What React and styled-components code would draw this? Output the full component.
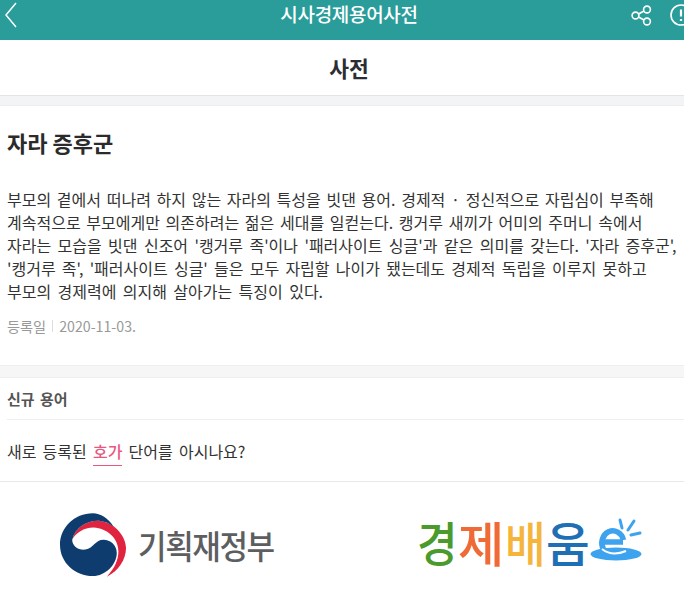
import React from "react";
import styled, { createGlobalStyle } from "styled-components";

const Global = createGlobalStyle`
  html, body { margin: 0; padding: 0; background: #fff; overflow: hidden; width: 684px; height: 594px; }
  * { box-sizing: border-box; }
  body { font-family: "Noto Sans CJK KR", "Noto Sans", sans-serif; color: #333; }
`;
const Page = styled.div`width: 698px; height: 594px; overflow: hidden; background: #fff;`;
const TopBar = styled.header`
  height: 40px; background: #2a9d9a; display: grid; grid-template-columns: 1fr auto 1fr; align-items: center;
  padding: 0 5px; color: #fff;
`;
const TopTitle = styled.h1`margin: -12px 0 0; font-size: 19px; font-weight: 500; letter-spacing: -0.3px; line-height: 26px;`;
const TopActions = styled.div`display: flex; align-items: center; justify-content: flex-end; gap: 16px;`;
const Back = styled.svg`width: 18px; height: 32px; margin-top: -10px; fill: none; stroke: #fff; stroke-width: 1.5;`;
const ActionIcon = styled.svg`width: 24px; height: 24px; fill: none; stroke: #fff; stroke-width: 1.6; margin-top: -10px;`;
const SubBar = styled.div`
  height: 56px; display: flex; align-items: center; justify-content: center; border-bottom: 1px solid #e2e4e8;
  font-size: 21.5px; font-weight: 700; color: #2c2c33; padding-bottom: 1px;
`;
const Band = styled.div`height: 10px; background: #f2f4f6; border-bottom: 1px solid #eceef0;`;
const Article = styled.section`padding: 18px 7px 0; height: 259px;`;
const Term = styled.h2`margin: 0; font-size: 22px; font-weight: 700; line-height: 36px; color: #2b2b2b;`;
const Body = styled.p`margin: 28px 0 0; font-size: 16px; line-height: 23px; color: #333;`;
const Line = styled.span`display: block; white-space: nowrap; word-spacing: ${p => p.$ws}px;`;
const Meta = styled.div`display: flex; align-items: center; margin-top: 11px; font-size: 14.2px; color: #999; line-height: 24px;`;
const MetaSep = styled.span`width: 1px; height: 12px; background: #ddd; margin: 0 6px 0 6px;`;
const GreyBand = styled.div`height: 13px; background: #f6f6f6; border-top: 1px solid #eee; border-bottom: 1px solid #eee;`;
const NewSection = styled.section`padding: 0 0 0 7px; border-bottom: 1px solid #e8e8e8; height: 104px;`;
const NewHead = styled.div`height: 42px; display: flex; align-items: center; font-size: 15px; font-weight: 700; color: #555; word-spacing: 2px; border-bottom: 1px solid #eee;`;
const NewText = styled.p`margin: 18px 0 0; font-size: 16px; line-height: 26px; color: #333; word-spacing: 2.6px;`;
const Hot = styled.a`color: #e9587f; font-weight: 500; border-bottom: 1px solid #e9587f; padding-bottom: 2px;`;
const Logos = styled.div`display: flex; height: 112px; width: 684px;`;
const MofLogo = styled.div`display: flex; align-items: center; margin: 29px 0 0 59px; height: 68px; width: 358px;`;
const MofName = styled.span`font-size: 33px; font-weight: 500; color: #5c5e60; letter-spacing: -1.5px; margin-left: 11px; line-height: 40px; transform: scaleX(0.94); transform-origin: left;`;
const Taegeuk = styled.svg`width: 68px; height: 66px; flex: none;`;
const EduLogo = styled.div`display: flex; align-items: center; height: 60px; margin-top: 29px;`;
const EduChar = styled.span`display: block; width: ${p => p.$w}px; font-size: 48px; font-weight: 500; line-height: 56px; color: ${p => p.$c}; transform: scaleX(${p => p.$sx}); transform-origin: left;`;
const EduE = styled.svg`width: 52px; height: 52px; flex: none; margin-top: -2px;`;

const lines = [
  ["부모의 곁에서 떠나려 하지 않는 자라의 특성을 빗댄 용어. 경제적 · 정신적으로 자립심이 부족해", 2.1],
  ["계속적으로 부모에게만 의존하려는 젊은 세대를 일컫는다. 캥거루 새끼가 어미의 주머니 속에서", 2.1],
  ["자라는 모습을 빗댄 신조어 '캥거루 족'이나 '패러사이트 싱글'과 같은 의미를 갖는다. '자라 증후군',", 2.8],
  ["'캥거루 족', '패러사이트 싱글' 들은 모두 자립할 나이가 됐는데도 경제적 독립을 이루지 못하고", 2.65],
  ["부모의 경제력에 의지해 살아가는 특징이 있다.", 2.8],
];

export default function App() {
  return (
    <Page>
      <Global />
      <TopBar>
        <Back viewBox="0 0 18 32"><path d="M11 4 L1 16 L11 28" /></Back>
        <TopTitle>시사경제용어사전</TopTitle>
        <TopActions>
          <ActionIcon viewBox="0 0 24 24">
            <circle cx="18" cy="6.5" r="3.4" /><circle cx="18" cy="18.5" r="3.4" /><circle cx="6.5" cy="12.5" r="3.4" />
            <path d="M9.5 11 L15 8 M9.5 14 L15 17" />
          </ActionIcon>
          <ActionIcon viewBox="0 0 24 24">
            <circle cx="12" cy="12" r="10" />
            <path d="M12 6.5 V13.5 M12 16 V18" strokeWidth="2.2" />
          </ActionIcon>
        </TopActions>
      </TopBar>
      <SubBar>사전</SubBar>
      <Band />
      <Article>
        <Term>자라 증후군</Term>
        <Body>{lines.map(([l, ws]) => <Line key={l} $ws={ws}>{l}</Line>)}</Body>
        <Meta>등록일<MetaSep />2020-11-03.</Meta>
      </Article>
      <GreyBand />
      <NewSection>
        <NewHead>신규 용어</NewHead>
        <NewText>새로 등록된 <Hot>호가</Hot> 단어를 아시나요?</NewText>
      </NewSection>
      <Logos>
        <MofLogo>
          <Taegeuk viewBox="25 22 206 198">
            <path d="M65 105 C75 65 115 45 150 48 C200 55 228 100 228 130 C228 165 205 200 170 217 C195 190 205 165 205 140 C205 100 170 70 130 68 C100 68 75 85 65 105 Z" fill="#e0233f" />
            <path d="M128 25 C70 25 28 70 28 120 C28 175 75 215 128 215 C165 215 200 180 200 145 C200 120 180 105 160 105 C135 105 130 130 105 135 C85 138 65 125 65 105 C75 65 115 45 150 48 C165 50 178 55 190 65 C175 40 150 25 128 25 Z" fill="#0f3c6e" />
          </Taegeuk>
          <MofName>기획재정부</MofName>
        </MofLogo>
        <EduLogo>
          <EduChar $w={41} $sx={0.92} $c="#4a9a2e">경</EduChar>
          <EduChar $w={47} $sx={1.05} $c="#ef6a35">제</EduChar>
          <EduChar $w={41} $sx={0.92} $c="#f5b43c">배</EduChar>
          <EduChar $w={44} $sx={0.99} $c="#1f6fb5">움</EduChar>
          <EduE viewBox="0 0 52 52">
            <ellipse cx="26" cy="40" rx="25.5" ry="6.5" fill="#3ea3ef" />
            <path d="M12 28 H33 M33.5 26 A11 12 0 1 0 30 38" fill="none" stroke="#3ea3ef" strokeWidth="5.5" />
            <path d="M12 35 Q22 43 36 37" fill="none" stroke="#fff" strokeWidth="2" />
            <path d="M30 6 L32 14 M44 7 L38 16 M50 19 L41 21" stroke="#3ea3ef" strokeWidth="3" strokeLinecap="round" />
          </EduE>
        </EduLogo>
      </Logos>
    </Page>
  );
}
